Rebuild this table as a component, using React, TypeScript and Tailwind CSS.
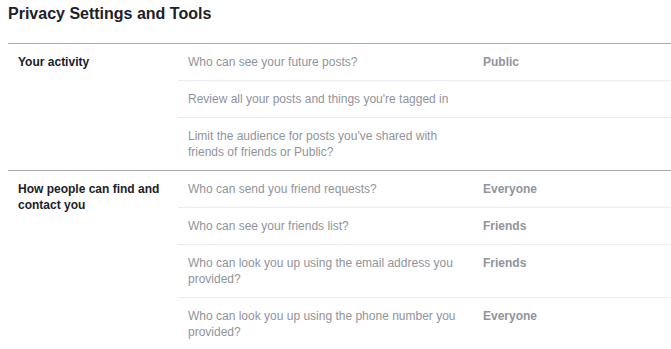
import React from "react";

type Row = { q: string; v?: string };
type Section = { label: string; rows: Row[] };

const sections: Section[] = [
  {
    label: "Your activity",
    rows: [
      { q: "Who can see your future posts?", v: "Public" },
      { q: "Review all your posts and things you're tagged in" },
      { q: "Limit the audience for posts you've shared with friends of friends or Public?" },
    ],
  },
  {
    label: "How people can find and contact you",
    rows: [
      { q: "Who can send you friend requests?", v: "Everyone" },
      { q: "Who can see your friends list?", v: "Friends" },
      { q: "Who can look you up using the email address you provided?", v: "Friends" },
      { q: "Who can look you up using the phone number you provided?", v: "Everyone" },
    ],
  },
];

export default function App() {
  return (
    <div className="w-[671px] h-[349px] overflow-hidden bg-white font-['Liberation_Sans',Arial,sans-serif]">
      <h1 className="h-[43px] pl-2 pt-[4px] text-[16px] leading-[20px] font-bold text-[#1d2129]">
        Privacy Settings and Tools
      </h1>
      {sections.map((s) => (
        <div key={s.label} className="ml-2 flex border-t border-[#aaaaaa]">
          <div className="w-[170px] shrink-0 py-[10px] pl-[10px] pr-[10px] text-[12px] leading-[16px] font-bold text-[#1d2129]">
            {s.label}
          </div>
          <div className="flex flex-1 flex-col">
            {s.rows.map((r, i) => (
              <div
                key={r.q}
                className={
                  "flex text-[12px] leading-[16px] text-[#90949c] " +
                  (i < s.rows.length - 1 ? "border-b border-[#e9ebee]" : "")
                }
              >
                <div className="w-[295px] shrink-0 px-[10px] py-[10px]">{r.q}</div>
                <div className="flex-1 py-[10px] pl-[10px] font-bold">{r.v}</div>
              </div>
            ))}
          </div>
        </div>
      ))}
    </div>
  );
}
